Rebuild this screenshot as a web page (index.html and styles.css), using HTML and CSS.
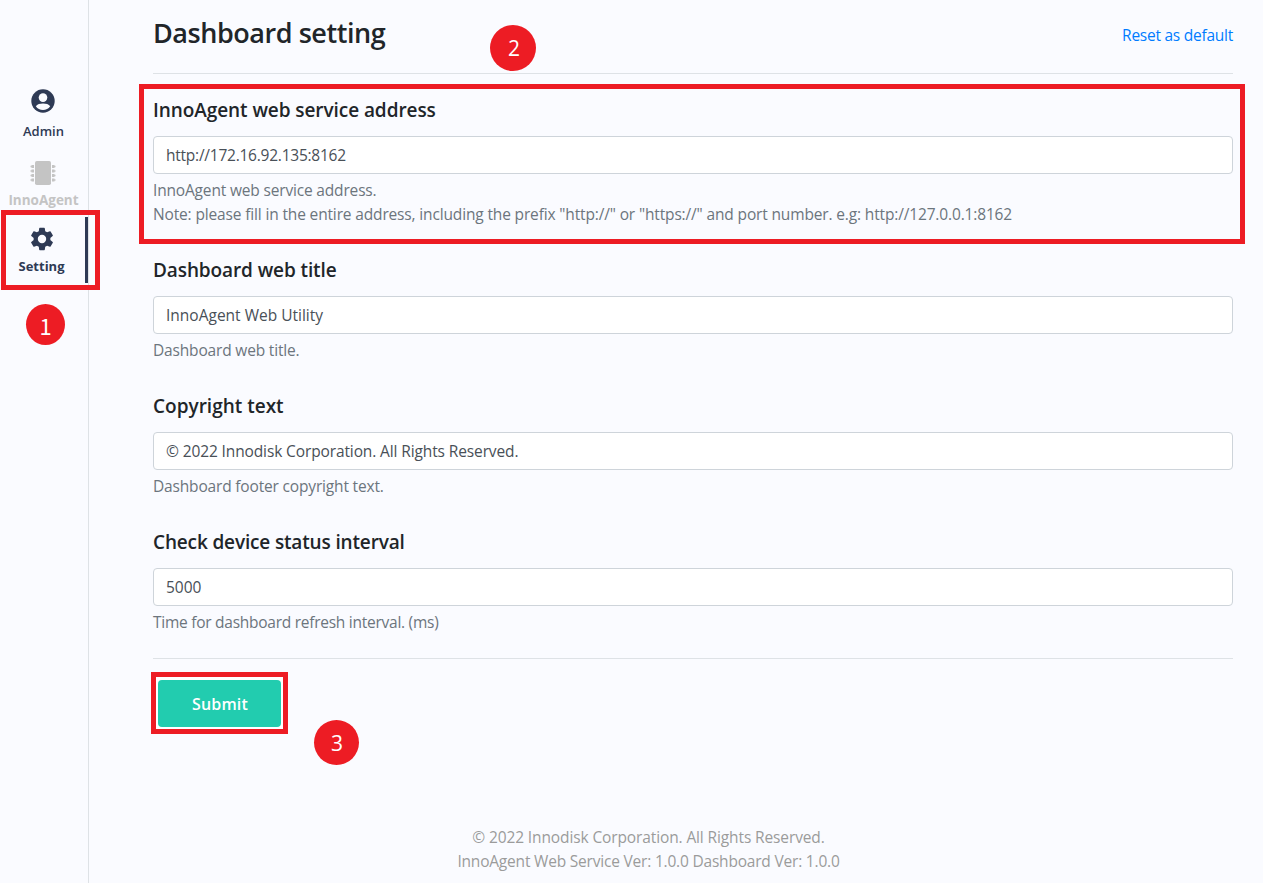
FILE: index.html
```html
<!DOCTYPE html>
<html lang="en">
<head>
<meta charset="utf-8">
<title>InnoAgent Web Utility</title>
<link rel="stylesheet" href="styles.css">
</head>
<body>
<div class="app">
  <nav class="sidebar">
    <a class="nav-item admin">
      <svg class="icon" width="24" height="24" viewBox="0 0 24 24"><circle cx="12" cy="12" r="11.7" fill="#2e3a55"/><circle cx="12" cy="8.6" r="4.3" fill="#fafbff"/><path d="M4.800 17.300C6.200 15.200 9 14.600 12 14.600s5.800.6 7.200 2.700C17.500 19.900 15 20.900 12 20.900S6.500 19.900 4.800 17.300z" fill="#fafbff"/></svg>
      <span class="nav-text t-admin">Admin</span>
    </a>
    <a class="nav-item agent">
      <svg class="icon" width="26" height="24" viewBox="0 0 26 24" fill="#c4c4c4"><rect x="5" width="16" height="24" rx="1.800"/><path d="M1.500 4H4v3H1.500V6.300H.5V4.700h1zM1.500 8.500H4v3H1.500v-.7H.5V9.200h1zM1.500 13H4v3H1.500v-.7H.5v-1.600h1zM1.500 17.500H4v3H1.500v-.7H.5v-1.600h1zM24.500 4H22v3h2.500v-.7h1V4.700h-1zM24.500 8.500H22v3h2.500v-.7h1V9.200h-1zM24.500 13H22v3h2.500v-.7h1v-1.600h-1zM24.500 17.500H22v3h2.500v-.7h1v-1.600h-1z"/></svg>
      <span class="nav-text t-agent">InnoAgent</span>
    </a>
    <a class="nav-item setting">
      <svg class="icon" width="28" height="28" viewBox="0 0 24 24" fill="#2e3a55"><path d="M19.140 12.940c.04-.3.060-.61.060-.94s-.02-.64-.07-.94l2.030-1.580a.49.490 0 0 0 .12-.61l-1.920-3.320a.488.488 0 0 0-.59-.22l-2.390.96c-.5-.38-1.030-.7-1.620-.94l-.36-2.540a.484.484 0 0 0-.48-.41h-3.840c-.24 0-.43.17-.47.41l-.36 2.540c-.59.240-1.130.57-1.620.94l-2.390-.96c-.22-.08-.47 0-.59.22L2.740 8.870c-.12.210-.08.470.12.610l2.030 1.580c-.05.300-.09.630-.09.940s.02.640.070.940l-2.030 1.580a.49.490 0 0 0-.12.610l1.920 3.320c.12.220.37.290.59.220l2.390-.96c.5.380 1.030.7 1.620.94l.36 2.540c.05.240.24.410.48.410h3.840c.24 0 .44-.17.470-.41l.36-2.540c.59-.24 1.130-.56 1.620-.94l2.390.96c.22.080.47 0 .59-.22l1.920-3.320c.12-.22.070-.47-.12-.61l-2.010-1.580zM12 15.600a3.600 3.600 0 1 1 0-7.200 3.600 3.600 0 0 1 0 7.200z"/></svg>
      <span class="nav-text t-setting">Setting</span>
    </a>
  </nav>
  <main class="main">
    <header class="header">
      <h1 class="title"><span class="t-title">Dashboard setting</span></h1>
      <a class="reset"><span class="t-reset">Reset as default</span></a>
    </header>
    <form class="form">
      <section class="field">
        <h2 class="label"><span class="t-l1">InnoAgent web service address</span></h2>
        <div class="input"><span class="t-i1">http://172.16.92.135:8162</span></div>
        <p class="help"><span class="t-h1">InnoAgent web service address.</span><br><span class="t-h2">Note: please fill in the entire address, including the prefix "http://" or "https://" and port number. e.g: http://127.0.0.1:8162</span></p>
      </section>
      <section class="field">
        <h2 class="label"><span class="t-l2">Dashboard web title</span></h2>
        <div class="input"><span class="t-i2">InnoAgent Web Utility</span></div>
        <p class="help"><span class="t-h3">Dashboard web title.</span></p>
      </section>
      <section class="field">
        <h2 class="label"><span class="t-l3">Copyright text</span></h2>
        <div class="input"><span class="t-i3">© 2022 Innodisk Corporation. All Rights Reserved.</span></div>
        <p class="help"><span class="t-h4">Dashboard footer copyright text.</span></p>
      </section>
      <section class="field">
        <h2 class="label"><span class="t-l4">Check device status interval</span></h2>
        <div class="input"><span class="t-i4">5000</span></div>
        <p class="help"><span class="t-h5">Time for dashboard refresh interval. (ms)</span></p>
      </section>
    </form>
    <div class="actions"><div class="submit-frame"><button class="submit" type="button"><span class="t-submit">Submit</span></button></div></div>
    <footer class="footer">
      <div><span class="t-f1">© 2022 Innodisk Corporation. All Rights Reserved.</span></div>
      <div><span class="t-f2">InnoAgent Web Service Ver: 1.0.0 Dashboard Ver: 1.0.0</span></div>
    </footer>
  </main>
  <div class="frame frame-setting"></div>
  <div class="frame frame-address"></div>
  <div class="step step-1">1</div>
  <div class="step step-2">2</div>
  <div class="step step-3">3</div>
</div>
</body>
</html>
```
FILE: styles.css
```css
* { box-sizing: border-box; }
body { margin: 0; background: #fafbff; font: 15.5px/24px "Open Sans", sans-serif; color: #212529; }
h1, h2, p { margin: 0; }
.app { position: relative; display: flex; height: 883px; overflow: hidden; }
.sidebar { width: 89px; border-right: 1px solid #dee2e6; display: flex; flex-direction: column; padding-top: 89px; }
.nav-item { display: flex; flex-direction: column; align-items: center; width: 87px; font-weight: 600; font-size: 13px; line-height: 20px; color: #2e3a55; }
.icon { display: block; flex: none; }
.admin { height: 72px; gap: 8px; }
.admin .icon, .agent .icon { margin-right: 1px; }
.agent { height: 56px; gap: 5px; color: #c4c4c4; font-weight: 700; font-size: 13.5px; }
.setting { height: 66px; padding: 8px 2px 0 0; border-right: 3px solid #2e3a55; width: 88px; gap: 3px; font-weight: 700; }
.main { flex: 1; padding: 0 30px 0 64px; display: flex; flex-direction: column; }
.header { display: flex; justify-content: space-between; height: 74px; border-bottom: 1px solid #dee2e6; }
.title { font-size: 27px; line-height: 34px; font-weight: 600; padding-top: 16px; }
.reset { color: #007bff; padding-top: 23px; }
.form { display: flex; flex-direction: column; gap: 32px; padding: 24px 0; border-bottom: 1px solid #dee2e6; }
.label { font-size: 19px; line-height: 24px; font-weight: 600; margin-bottom: 14px; }
.input { height: 38px; border: 1px solid #ced4da; border-radius: 4px; background: #fff; padding: 6px 12px; color: #495057; margin-bottom: 4px; }
.help { color: #6c757d; }
.actions { padding-top: 13px; margin-left: -2px; height: 75px; }
.submit-frame { width: 137px; height: 62px; border: 5px solid #ed1c24; background: #fff; padding: 3px 2px 2px; }
.submit { display: block; width: 123px; height: 47px; border: 0; border-radius: 4px; background: #22ccaf; color: #fff; font: 600 16px/24px "Open Sans", sans-serif; padding: 1px 0 0 1px; }
.footer { margin-top: 91px; text-align: center; color: #9b9b9b; padding-right: 89px; }
.frame { position: absolute; border: 5px solid #ed1c24; }
.frame-setting { left: 1px; top: 210px; width: 99px; height: 80px; }
.frame-address { left: 139px; top: 84px; width: 1106px; height: 160px; }
.step { position: absolute; display: flex; align-items: center; justify-content: center; border-radius: 50%; background: #ed1c24; color: #fff; font-size: 21px; }
.step-1 { left: 26px; top: 304px; width: 39px; height: 41px; font-family: "Noto Sans CJK TC", sans-serif; font-size: 22px; }
.step-2 { left: 490px; top: 25px; width: 46px; height: 46px; padding-left: 2px; }
.step-3 { left: 314px; top: 720px; width: 45px; height: 45px; padding-left: 1px; }
/* per-string tracking */
.t-title { letter-spacing: -.45px; }
.t-l1 { letter-spacing: -.07px; }
.t-l2 { letter-spacing: -.1px; }
.t-l4 { letter-spacing: -.15px; }
.t-reset { letter-spacing: -.25px; }
.t-i1 { letter-spacing: -.24px; }
.t-i3 { letter-spacing: -.12px; }
.t-h1, .t-h3, .t-h4 { letter-spacing: -.17px; }
.t-h2 { letter-spacing: -.15px; }
.t-h5 { letter-spacing: -.26px; }
.t-f1 { letter-spacing: -.12px; }
.t-f2 { letter-spacing: -.2px; }
.t-submit { letter-spacing: .15px; }
```
